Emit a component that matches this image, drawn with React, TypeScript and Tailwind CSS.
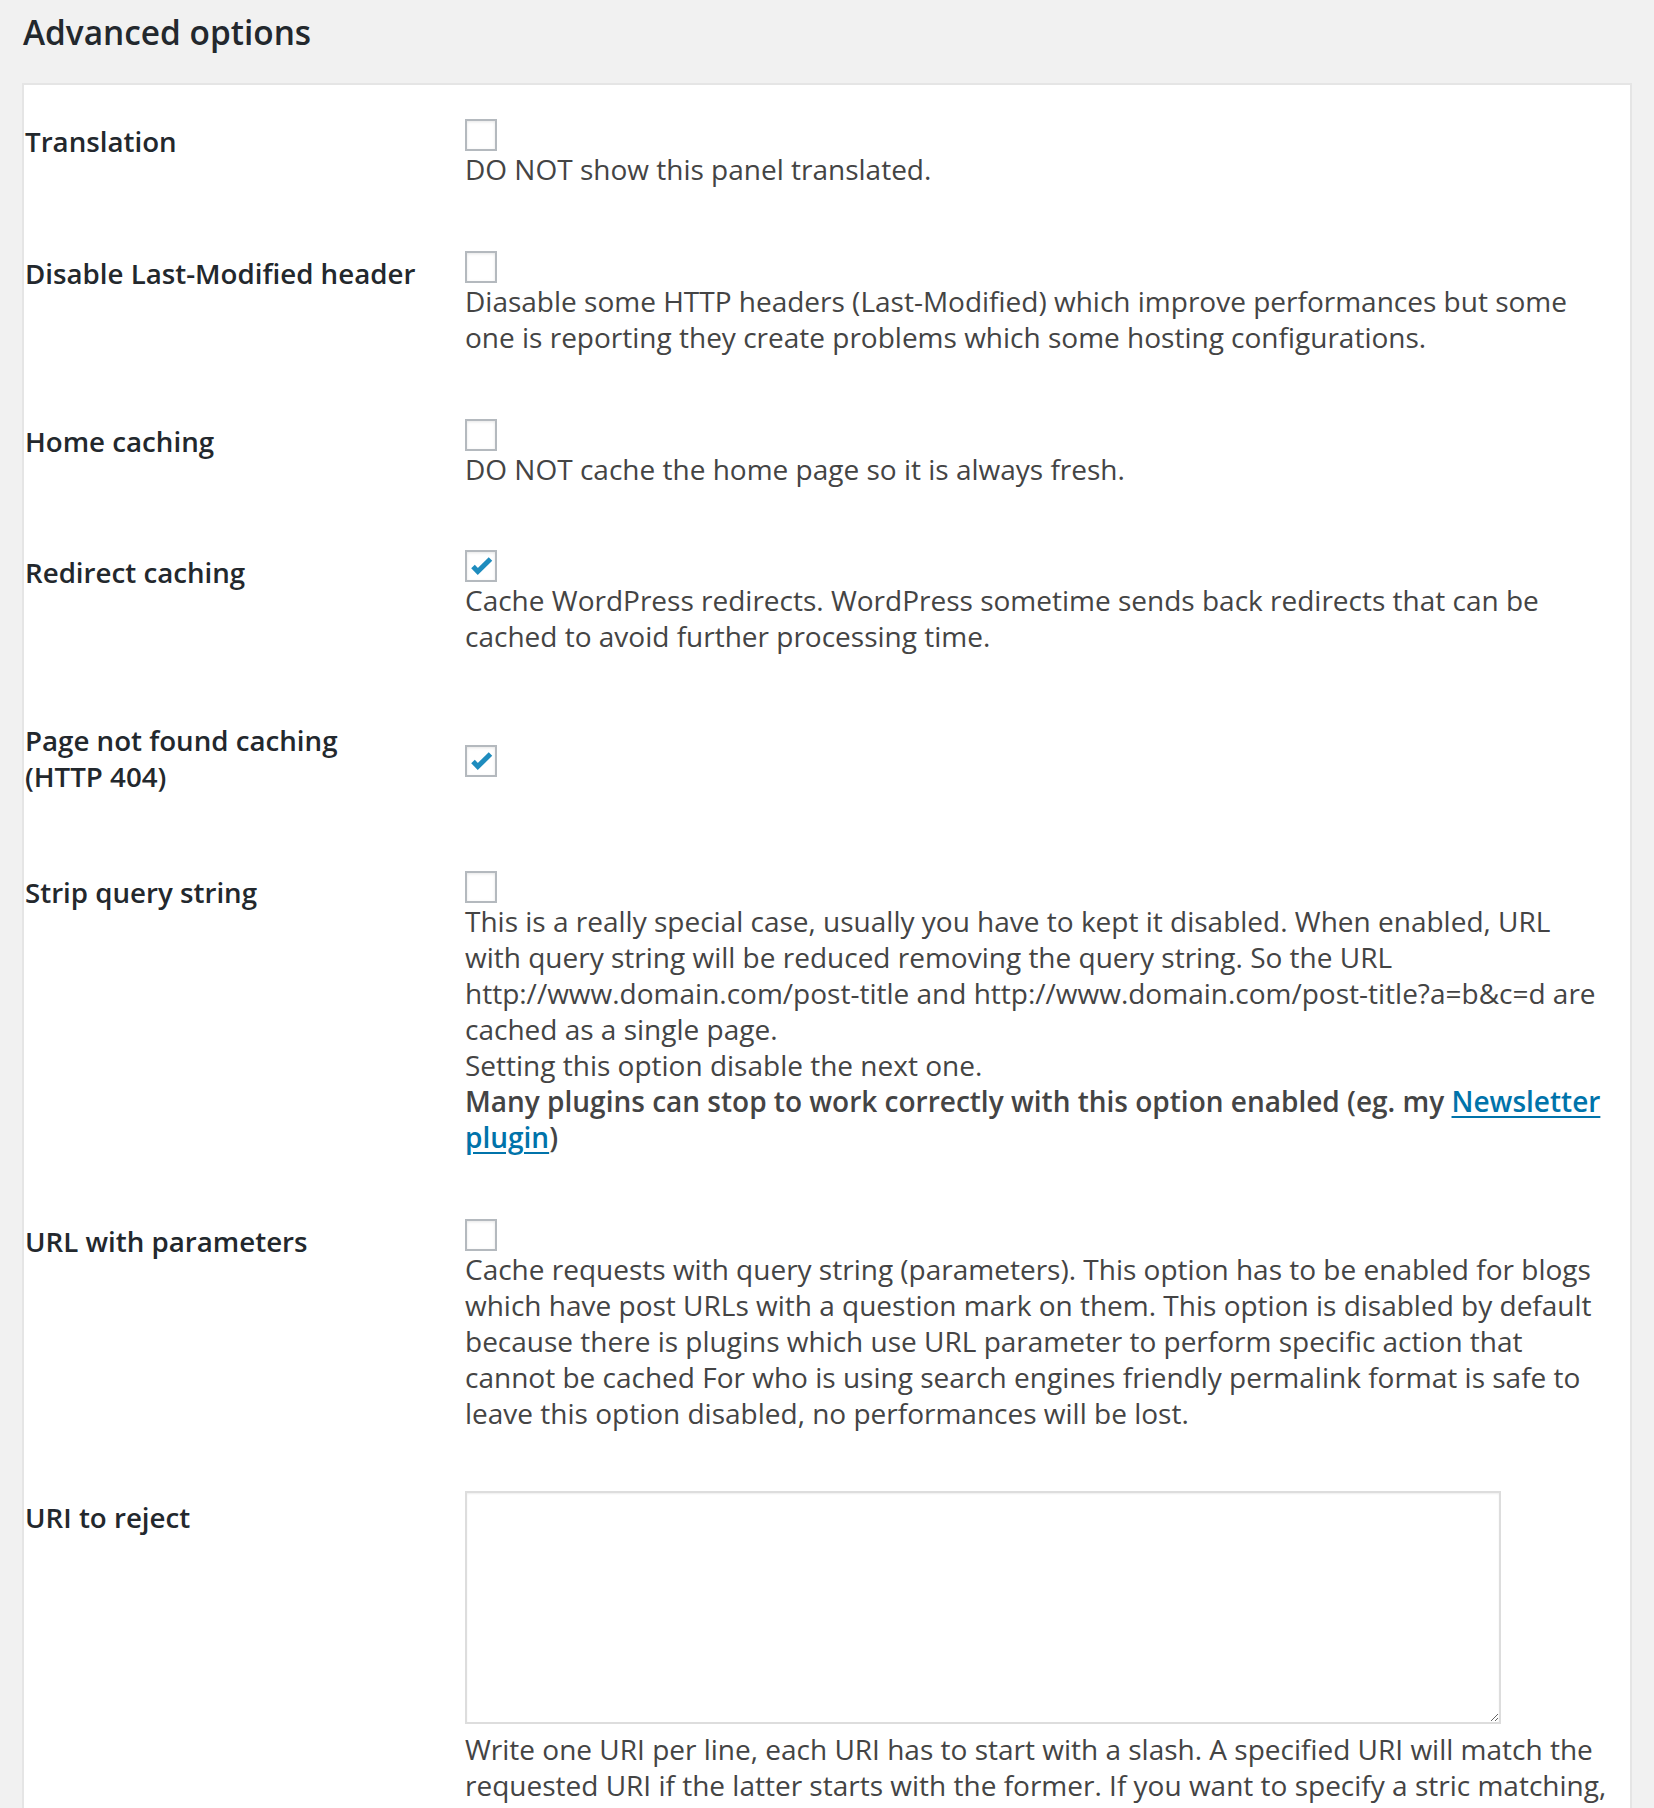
import type { FC, ReactNode } from "react";

const Checkbox: FC<{ checked?: boolean }> = ({ checked }) => (
  <div className="relative w-[32px] h-[32px] border-2 border-[#b4b9be] bg-white shadow-[inset_0_1px_3px_rgba(0,0,0,0.1)]">
    {checked && (
      <svg viewBox="0 0 32 32" className="absolute -left-[2px] -top-[2px] w-[32px] h-[32px]" fill="none">
        <polyline points="8,16.5 12.8,21.5 25.5,9" stroke="#1e8cbe" strokeWidth="5" strokeLinejoin="miter" />
      </svg>
    )}
  </div>
);

interface RowProps {
  label: ReactNode;
  children: ReactNode;
  center?: boolean;
}

const Row: FC<RowProps> = ({ label, children, center }) => (
  <div className="flex">
    <div className="w-[441px] shrink-0 pt-[38px] pb-[42px] pl-[1px] pr-[20px] text-[27.7px] leading-[36px] font-semibold text-[#23282d]">
      {label}
    </div>
    <div className={"flex-1 pr-[20px] pt-[30px] pb-[29.75px] flex flex-col" + (center ? " justify-center" : "")}>
      {children}
    </div>
  </div>
);

const Desc: FC<{ children: ReactNode }> = ({ children }) => (
  <p className="text-[28px] leading-[36px] text-[#444]">{children}</p>
);

export default function App() {
  return (
    <div
      className="h-[1808px] overflow-hidden bg-[#f1f1f1] px-[22px] pt-[11px]"
      style={{ fontFamily: '"Open Sans", "Noto Sans", sans-serif' }}
    >
      <h2 className="text-[33.4px] leading-[43px] font-semibold text-[#23282d] ml-[1px] mb-[29px]">
        Advanced options
      </h2>

      <div className="bg-white border-2 border-[#e5e5e5]">
        <Row label="Translation">
          <div className="pt-[4px]"><Checkbox /></div>
          <Desc>DO NOT show this panel translated.</Desc>
        </Row>

        <Row label="Disable Last-Modified header">
          <div className="pt-[4px]"><Checkbox /></div>
          <Desc>
            Diasable some HTTP headers (Last-Modified) which improve performances but some one is reporting they create
            problems which some hosting configurations.
          </Desc>
        </Row>

        <Row label="Home caching">
          <div className="pt-[4px]"><Checkbox /></div>
          <Desc>DO NOT cache the home page so it is always fresh.</Desc>
        </Row>

        <Row label="Redirect caching">
          <div className="pt-[4px]"><Checkbox checked /></div>
          <Desc>
            Cache WordPress redirects. WordPress sometime sends back redirects that can be cached to avoid further
            processing time.
          </Desc>
        </Row>

        <Row label={<>Page not found caching<br />(HTTP 404)</>} center>
          <div className="pt-[2px]"><Checkbox checked /></div>
        </Row>

        <Row label="Strip query string">
          <div className="pt-[5px]"><Checkbox /></div>
          <Desc>
            This is a really special case, usually you have to kept it disabled. When enabled, URL with query string
            will be reduced removing the query string. So the URL http://www.domain.com/post-title and
            http://www.domain.com/post-title?a=b&amp;c=d are cached as a single page.
            <br />
            Setting this option disable the next one.
            <br />
            <strong className="font-semibold">
              Many plugins can stop to work correctly with this option enabled (eg. my{" "}
              <a href="#" className="text-[#0073aa] underline underline-offset-[4px] decoration-[2px]">
                Newsletter plugin
              </a>
              )
            </strong>
          </Desc>
        </Row>

        <Row label="URL with parameters">
          <div className="pt-[4px]"><Checkbox /></div>
          <Desc>
            Cache requests with query string (parameters). This option has to be enabled for blogs which have post URLs
            with a question mark on them. This option is disabled by default because there is plugins which use URL
            parameter to perform specific action that cannot be cached For who is using search engines friendly
            permalink format is safe to leave this option disabled, no performances will be lost.
          </Desc>
        </Row>

        <Row label="URI to reject">
          <textarea
            className="block w-[1036px] h-[233px] border-2 border-[#ddd] bg-white shadow-[inset_0_1px_2px_rgba(0,0,0,0.07)] outline-none"
            defaultValue=""
          />
          <div className="mt-[7px]">
            <Desc>
              Write one URI per line, each URI has to start with a slash. A specified URI will match the requested URI
              if the latter starts with the former. If you want to specify a stric matching,
            </Desc>
          </div>
        </Row>
      </div>
    </div>
  );
}
